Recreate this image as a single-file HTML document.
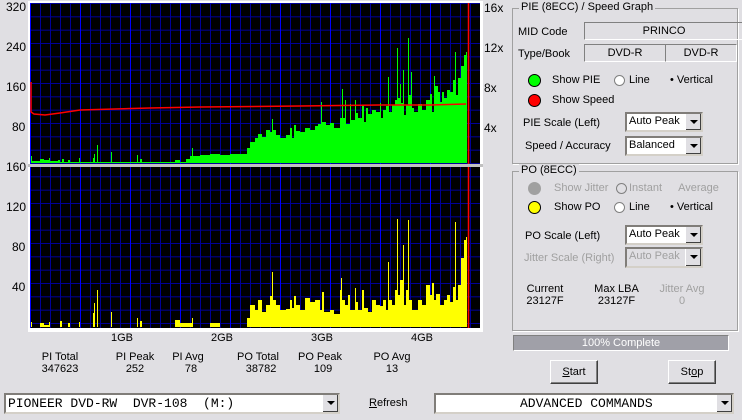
<!DOCTYPE html>
<html><head><meta charset="utf-8"><style>
body{margin:0;width:742px;height:420px;background:#e0dfe3;font-family:"Liberation Sans",sans-serif;font-size:11px;color:#000;position:relative;overflow:hidden}
.a{position:absolute;white-space:nowrap}
.c{text-align:center}
.gb{position:absolute;border:1px solid #a0a0a0;box-shadow:1px 1px 0 #fff}
.gt{position:absolute;background:#e0dfe3;padding:0 2px;top:-8px;left:6px}
.fld{position:absolute;border:1px solid;border-color:#808080 #fff #fff #808080;text-align:center;line-height:16px}
.cb{position:absolute;background:#fff;border:2px inset #d4d0c8;box-sizing:border-box;line-height:15px;padding-left:2px}
.cb.dis{background:#e0dfe3;color:#a0a0a0}
.ar{position:absolute;right:0;top:0;width:16px;height:100%;background:#e0dfe3;border-left:1px solid #fff;box-sizing:border-box;box-shadow:inset -1px -1px 0 #404040}
.ar:after{content:"";position:absolute;left:4px;top:6px;border:4px solid transparent;border-top:4px solid #000;border-bottom:0}
.rad{position:absolute;width:11px;height:11px;border-radius:50%;background:#fff;border:1px solid #808080;box-sizing:border-box}
.led{position:absolute;width:13px;height:13px;border-radius:50%;border:1px solid #000;box-sizing:border-box}
.btn{position:absolute;background:#e0dfe3;border:1px solid;border-color:#fff #404040 #404040 #fff;box-shadow:inset -1px -1px 0 #808080;text-align:center;box-sizing:border-box}
.g{color:#a0a0a0}
</style></head><body>
<svg class="a" style="left:0;top:0" width="500" height="335">
<defs><pattern id="p" x="30" y="3" width="10" height="13.333" patternUnits="userSpaceOnUse"><rect width="10" height="13.333" fill="#000"/><path d="M0.5 0V14M0 0.5H10" stroke="#000099" stroke-width="1"/></pattern></defs>
<rect x="28" y="1" width="455" height="331" fill="#fff"/>
<rect x="30" y="3" width="450" height="162" fill="url(#p)"/>
<rect x="30" y="167" width="450" height="161" fill="url(#p)"/>
<g stroke="#0000ff" stroke-width="1">
<path d="M30.5 3V328M80.5 3V328M130.5 3V328M180.5 3V328M230.5 3V328M280.5 3V328M330.5 3V328M380.5 3V328M430.5 3V328"/>
</g>
<rect x="28" y="164" width="455" height="3" fill="#c0c0c0"/>
<path fill="#00ff00" d="M31 163V156H32V161H40V159H44V160H49V158H50V161H58V160H60V162H62V159H64V162H68V160H70V162H79V158H80V162H93V158H94V154H95V162H97V145H98V162H111V152H112V162H137V155H138V162H140V159H142V162H175V160H180V162H186V159H190V156H192V148H193V156H200V155H210V154H220V155H230V154H247V148H250V142H255V138H258V134H262V137H266V130H270V132H272V119H273V130H276V135H280V138H286V135H290V128H292V138H294V125H296V131H300V132H305V128H310V130H315V126H318V124H321V102H322V122H326V125H330V123H334V128H340V118H342V89H343V118H345V100H346V124H350V104H351V120H355V100H356V113H358V118H362V105H364V122H366V108H368V114H372V110H376V112H380V103H381V118H383V110H386V106H388V77H389V112H392V105H395V100H397V48H398V98H400V84H401V103H403V70H404V115H406V105H408V38H409V95H411V72H412V108H414V112H418V104H422V110H426V100H430V94H432V112H434V76H435V86H438V92H440V102H442V92H444V98H447V90H450V92H453V80H455V52H456V95H458V78H461V66H464V55H466V52H467V163Z"/>
<path fill="none" stroke="#ff0000" stroke-width="1.5" d="M31 82V112L34 114L45 115L60 113L80 110L150 108L200 107L300 106L380 105L430 105L466 104"/>
<path fill="#ffff00" d="M31 327V322H32V327H40V323H44V325H49V322H50V327H60V321H62V327H68V323H70V327H79V322H80V327H93V313H94V303H95V327H97V290H98V327H111V312H112V327H137V318H138V327H140V321H142V327H175V320H180V323H192V318H193V327H210V323H220V327H247V318H250V305H255V310H258V300H262V312H266V305H270V296H272V272H273V300H276V305H280V310H286V309H290V300H292V308H294V296H296V305H300V310H305V298H310V302H315V300H320V310H322V292H324V312H330V310H334V314H340V290H341V278H342V300H345V305H348V295H350V310H355V288H356V302H358V310H362V290H364V308H368V312H372V300H376V305H380V306H383V300H386V310H388V262H389V300H392V305H395V290H397V219H398V295H400V280H403V245H404V305H406V290H408V220H409V300H412V310H418V300H422V305H426V285H430V295H432V283H434V300H436V294H440V305H444V300H447V295H450V302H453V287H455V222H456V300H458V285H461V258H464V240H466V237H467V327Z"/>
<path d="M468.5 3V164M468.5 167V328" stroke="#ff0000" stroke-width="1.5"/>
</svg>
<div class="a" style="left:6px;top:0;font-size:12px">320</div>
<div class="a" style="left:6px;top:40px;font-size:12px">240</div>
<div class="a" style="left:6px;top:80px;font-size:12px">160</div>
<div class="a" style="left:12px;top:120px;font-size:12px">80</div>
<div class="a" style="left:6px;top:160px;font-size:12px">160</div>
<div class="a" style="left:6px;top:200px;font-size:12px">120</div>
<div class="a" style="left:12px;top:240px;font-size:12px">80</div>
<div class="a" style="left:12px;top:280px;font-size:12px">40</div>
<div class="a" style="left:484px;top:1px;font-size:12px">16x</div>
<div class="a" style="left:484px;top:41px;font-size:12px">12x</div>
<div class="a" style="left:484px;top:81px;font-size:12px">8x</div>
<div class="a" style="left:484px;top:121px;font-size:12px">4x</div>
<div class="a" style="left:111px;top:332px">1GB</div>
<div class="a" style="left:211px;top:332px">2GB</div>
<div class="a" style="left:311px;top:332px">3GB</div>
<div class="a" style="left:411px;top:332px">4GB</div>
<div class="a c" style="left:30px;width:60px;top:351px">PI Total<br>347623</div>
<div class="a c" style="left:105px;width:60px;top:351px">PI Peak<br>252</div>
<div class="a c" style="left:163px;width:50px;top:351px">PI Avg<br>&nbsp;&nbsp;78</div>
<div class="a c" style="left:228px;width:60px;top:351px">PO Total<br>&nbsp;&nbsp;38782</div>
<div class="a c" style="left:290px;width:60px;top:351px">PO Peak<br>&nbsp;&nbsp;109</div>
<div class="a c" style="left:362px;width:60px;top:351px">PO Avg<br>13</div>
<div class="cb" style="left:4px;top:393px;width:336px;height:21px;font-family:'Liberation Mono',monospace;font-size:13px;padding-top:1px">PIONEER DVD-RW&nbsp; DVR-108&nbsp; (M:)<div class="ar"></div></div>
<div class="a" style="left:369px;top:397px"><u>R</u>efresh</div>
<div class="cb" style="left:434px;top:393px;width:300px;height:21px;font-family:'Liberation Mono',monospace;font-size:13px;padding-left:84px;padding-top:1px">ADVANCED COMMANDS<div class="ar"></div></div>

<div class="gb" style="left:512px;top:8px;width:224px;height:154px"><div class="gt">PIE (8ECC) / Speed Graph</div></div>
<div class="a" style="left:518px;top:26px">MID Code</div>
<div class="fld" style="left:584px;top:22px;width:158px;height:16px">PRINCO</div>
<div class="a" style="left:518px;top:48px">Type/Book</div>
<div class="fld" style="left:584px;top:44px;width:80px;height:16px">DVD-R</div>
<div class="fld" style="left:665px;top:44px;width:70px;height:16px">DVD-R</div>
<div class="led" style="left:528px;top:74px;background:#00ff00"></div>
<div class="a" style="left:552px;top:74px">Show PIE</div>
<div class="rad" style="left:614px;top:75px"></div><div class="a" style="left:629px;top:74px">Line</div>
<div class="a" style="left:670px;top:74px">•&nbsp;Vertical</div>
<div class="led" style="left:528px;top:94px;background:#ff0000"></div>
<div class="a" style="left:552px;top:94px">Show Speed</div>
<div class="a" style="left:523px;top:117px">PIE Scale (Left)</div>
<div class="cb" style="left:625px;top:112px;width:78px;height:20px">Auto Peak<div class="ar"></div></div>
<div class="a" style="left:525px;top:140px">Speed / Accuracy</div>
<div class="cb" style="left:625px;top:136px;width:78px;height:20px">Balanced<div class="ar"></div></div>

<div class="gb" style="left:512px;top:171px;width:224px;height:158px"><div class="gt">PO (8ECC)</div></div>
<div class="led" style="left:528px;top:182px;background:#a0a0a0;border-color:#a0a0a0"></div>
<div class="a g" style="left:554px;top:182px">Show Jitter</div>
<div class="rad" style="left:616px;top:183px;background:#e0dfe3"></div><div class="a g" style="left:629px;top:182px">Instant</div>
<div class="a g" style="left:672px;top:182px">&nbsp;&nbsp;Average</div>
<div class="led" style="left:528px;top:201px;background:#ffff00"></div>
<div class="a" style="left:554px;top:201px">Show PO</div>
<div class="rad" style="left:614px;top:202px"></div><div class="a" style="left:629px;top:201px">Line</div>
<div class="a" style="left:670px;top:201px">•&nbsp;Vertical</div>
<div class="a" style="left:525px;top:230px">PO Scale (Left)</div>
<div class="cb" style="left:625px;top:225px;width:78px;height:20px">Auto Peak<div class="ar"></div></div>
<div class="a g" style="left:524px;top:252px">Jitter Scale (Right)</div>
<div class="cb dis" style="left:625px;top:247px;width:78px;height:21px">Auto Peak<div class="ar"></div></div>
<div class="a c" style="left:520px;width:50px;top:283px">Current<br>23127F</div>
<div class="a c" style="left:589px;width:55px;top:283px">Max LBA<br>23127F</div>
<div class="a c g" style="left:652px;width:60px;top:283px">Jitter Avg<br>0</div>
<div class="a c" style="left:513px;top:335px;width:214px;height:14px;background:#a0a0a8;color:#fff;line-height:14px;border:1px solid;border-color:#808080 #fff #fff #808080">100% Complete</div>
<div class="btn" style="left:550px;top:360px;width:48px;height:24px;line-height:22px"><u>S</u>tart</div>
<div class="btn" style="left:668px;top:360px;width:48px;height:24px;line-height:22px">St<u>o</u>p</div>
</body></html>
